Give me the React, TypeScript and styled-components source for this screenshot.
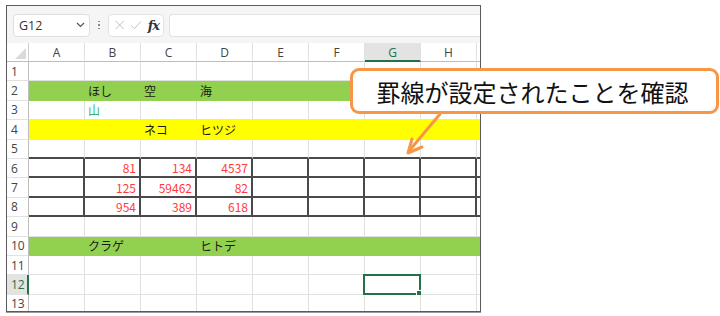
import React from 'react';
import styled, { createGlobalStyle } from 'styled-components';

const GlobalStyle = createGlobalStyle`
  body {
    margin: 0;
    background: #ffffff;
    font-family: "Noto Sans CJK JP", "Noto Sans", sans-serif;
  }
`;

const GREEN = '#92d050';
const YELLOW = '#ffff00';
const EXCEL = '#217346';
const GRID = '#e1e1e1';
const LINE = '#4a4a4a';

const COLS = ['A', 'B', 'C', 'D', 'E', 'F', 'G', 'H', 'I'];

interface CellData {
  text?: string;
  color?: string;
  right?: boolean;
}

interface RowData {
  fill?: string;
  cells: Record<string, CellData>;
}

const rows: RowData[] = [
  { cells: {} },
  { fill: GREEN, cells: { B: { text: 'ほし' }, C: { text: '空' }, D: { text: '海' } } },
  { cells: { B: { text: '山', color: '#34b574' } } },
  { fill: YELLOW, cells: { C: { text: 'ネコ' }, D: { text: 'ヒツジ' } } },
  { cells: {} },
  { cells: { B: { text: '81', right: true }, C: { text: '134', right: true }, D: { text: '4537', right: true } } },
  { cells: { B: { text: '125', right: true }, C: { text: '59462', right: true }, D: { text: '82', right: true } } },
  { cells: { B: { text: '954', right: true }, C: { text: '389', right: true }, D: { text: '618', right: true } } },
  { cells: {} },
  { fill: GREEN, cells: { B: { text: 'クラゲ' }, D: { text: 'ヒトデ' } } },
  { cells: {} },
  { cells: {} },
  { cells: {} },
];

const Page = styled.div`
  position: relative;
  width: 720px;
  height: 316px;
  padding: 5px 0 0 6px;
  box-sizing: border-box;
`;

const Frame = styled.div`
  width: 475px;
  height: 307px;
  border: 1px solid #5a5a5a;
  box-shadow: 0 1px 0 #9a9a9a;
  box-sizing: border-box;
  overflow: hidden;
  display: flex;
  flex-direction: column;
  background: #f5f5f5;
`;

const FormulaBar = styled.div`
  flex-shrink: 0;
  height: 37px;
  display: flex;
  align-items: center;
  padding: 1px 0 0 6px;
  box-sizing: border-box;
`;

const NameBox = styled.div`
  width: 77px;
  height: 23px;
  background: #fff;
  border: 1px solid #dedede;
  border-radius: 4px;
  box-sizing: border-box;
  display: flex;
  align-items: center;
  justify-content: space-between;
  padding: 0 4px 0 5px;
  font-family: "Open Sans", "Noto Sans", sans-serif;
  font-size: 12.5px;
  color: #333;
`;

const Dots = styled.div`
  width: 18px;
  display: flex;
  flex-direction: column;
  align-items: center;
  gap: 2px;
  span {
    width: 1.5px;
    height: 1.5px;
    background: #8a8a8a;
  }
`;

const FxBox = styled.div`
  width: 56px;
  height: 23px;
  background: #fff;
  border: 1px solid #e2e2e2;
  border-radius: 4px;
  box-sizing: border-box;
  display: flex;
  align-items: center;
  padding: 0 4px 0 5px;
  gap: 5px;
`;

const Fx = styled.span`
  font-family: "DejaVu Serif", "Liberation Serif", serif;
  font-style: italic;
  font-weight: bold;
  font-size: 13px;
  color: #333;
  letter-spacing: -1px;
`;

const FormulaInput = styled.div`
  flex: 1;
  height: 23px;
  margin-left: 5px;
  background: #fff;
  border: 1px solid #e2e2e2;
  border-right: none;
  border-radius: 4px 0 0 4px;
  box-sizing: border-box;
`;

const Sheet = styled.div`
  flex-shrink: 0;
  display: grid;
  grid-template-columns: 22px repeat(9, 56px);
  grid-template-rows: 19px repeat(13, 19.4px);
  background: #fff;
`;

const Corner = styled.div`
  background: #fff;
  border-right: 1px solid #cfcfcf;
  border-bottom: 1px solid #bdbdbd;
  box-sizing: border-box;
  display: flex;
  align-items: flex-end;
  justify-content: flex-end;
  padding: 0 2px 2px 0;
`;

const ColHead = styled.div<{ $sel?: boolean }>`
  background: ${p => (p.$sel ? '#e3e3e3' : '#fff')};
  color: ${p => (p.$sel ? EXCEL : '#444')};
  border-right: 1px solid ${GRID};
  border-bottom: ${p => (p.$sel ? `2px solid ${EXCEL}` : '1px solid #bdbdbd')};
  box-sizing: border-box;
  display: flex;
  align-items: center;
  justify-content: center;
  font-family: "Open Sans", "Noto Sans", sans-serif;
  font-size: 12px;
  padding-top: 1px;
`;

const RowHead = styled.div<{ $sel?: boolean }>`
  background: ${p => (p.$sel ? '#e3e3e3' : '#fff')};
  color: ${p => (p.$sel ? EXCEL : '#444')};
  border-right: ${p => (p.$sel ? `2px solid ${EXCEL}` : '1px solid #bdbdbd')};
  border-bottom: 1px solid ${GRID};
  box-sizing: border-box;
  display: flex;
  align-items: center;
  padding-left: 4px;
  font-family: "Open Sans", "Noto Sans", sans-serif;
  font-size: 12px;
`;

const Cell = styled.div<{
  $fill?: string;
  $color?: string;
  $right?: boolean;
  $rDark?: boolean;
  $bDark?: boolean;
}>`
  position: relative;
  background: ${p => p.$fill || '#fff'};
  border-right: ${p => (p.$rDark ? `2px solid ${LINE}` : `1px solid ${p.$fill || GRID}`)};
  border-bottom: ${p => (p.$bDark ? `2px solid ${LINE}` : `1px solid ${p.$fill || GRID}`)};
  box-sizing: border-box;
  display: flex;
  align-items: center;
  justify-content: ${p => (p.$right ? 'flex-end' : 'flex-start')};
  padding: 0 3px;
  font-family: "Noto Sans CJK JP", "Noto Sans", sans-serif;
  font-size: 12px;
  color: ${p => p.$color || '#1a1a1a'};
  white-space: nowrap;
`;

const Selection = styled.div`
  position: absolute;
  left: -2px;
  top: -1px;
  right: -1px;
  bottom: -1px;
  border: 2px solid ${EXCEL};
  pointer-events: none;
  &::after {
    content: '';
    position: absolute;
    right: -4px;
    bottom: -4px;
    width: 5px;
    height: 5px;
    background: ${EXCEL};
    border: 1px solid #fff;
  }
`;

const Callout = styled.div`
  position: absolute;
  left: 350px;
  top: 68px;
  width: 369px;
  height: 46px;
  border: 3px solid #f79646;
  border-radius: 9px;
  background: #fff;
  box-sizing: border-box;
  display: flex;
  align-items: center;
  justify-content: center;
  padding-right: 4px;
  font-family: "Noto Sans CJK JP", sans-serif;
  font-size: 24px;
  color: #111;
`;

const Arrow = styled.svg`
  position: absolute;
  left: 0;
  top: 0;
  pointer-events: none;
`;

const NUM_RED = '#ff3b3b';

export default function App() {
  return (
    <Page>
      <GlobalStyle />
      <Frame>
        <FormulaBar>
          <NameBox>
            <span>G12</span>
            <svg width="9" height="6" viewBox="0 0 9 6">
              <path d="M1 1 L4.5 4.5 L8 1" fill="none" stroke="#555" strokeWidth="1.2" />
            </svg>
          </NameBox>
          <Dots>
            <span />
            <span />
            <span />
          </Dots>
          <FxBox>
            <svg width="14" height="14" viewBox="0 0 14 14">
              <path d="M2 2 L12 12 M12 2 L2 12" stroke="#b5b5b5" strokeWidth="1" fill="none" />
            </svg>
            <svg width="15" height="14" viewBox="0 0 15 14">
              <path d="M1.5 7.5 L5.5 11.5 L13.5 2.5" stroke="#b5b5b5" strokeWidth="1" fill="none" />
            </svg>
            <Fx>fx</Fx>
          </FxBox>
          <FormulaInput />
        </FormulaBar>
        <Sheet>
          <Corner>
            <svg width="11" height="11" viewBox="0 0 11 11">
              <path d="M11 0 L11 11 L0 11 Z" fill="#dadada" />
            </svg>
          </Corner>
          {COLS.map(c => (
            <ColHead key={c} $sel={c === 'G'}>
              {c === 'I' ? '' : c}
            </ColHead>
          ))}
          {rows.map((row, ri) => {
            const n = ri + 1;
            const inBox = n >= 6 && n <= 8;
            return (
              <React.Fragment key={n}>
                <RowHead $sel={n === 12}>{n}</RowHead>
                {COLS.map(c => {
                  const d = row.cells[c];
                  const num = d?.right;
                  return (
                    <Cell
                      key={c}
                      $fill={row.fill}
                      $color={num ? NUM_RED : d?.color}
                      $right={num}
                      $rDark={inBox}
                      $bDark={inBox || n === 5}
                    >
                      {d?.text}
                      {n === 12 && c === 'G' && <Selection />}
                    </Cell>
                  );
                })}
              </React.Fragment>
            );
          })}
        </Sheet>
      </Frame>
      <Callout>罫線が設定されたことを確認</Callout>
      <Arrow width="720" height="316" viewBox="0 0 720 316">
        <path d="M440 114 L409 151" stroke="#f79646" strokeWidth="3" fill="none" strokeLinecap="round" />
        <path d="M412 139 L408 153 L422 147" stroke="#f79646" strokeWidth="3" fill="none" strokeLinecap="round" strokeLinejoin="round" />
      </Arrow>
    </Page>
  );
}
